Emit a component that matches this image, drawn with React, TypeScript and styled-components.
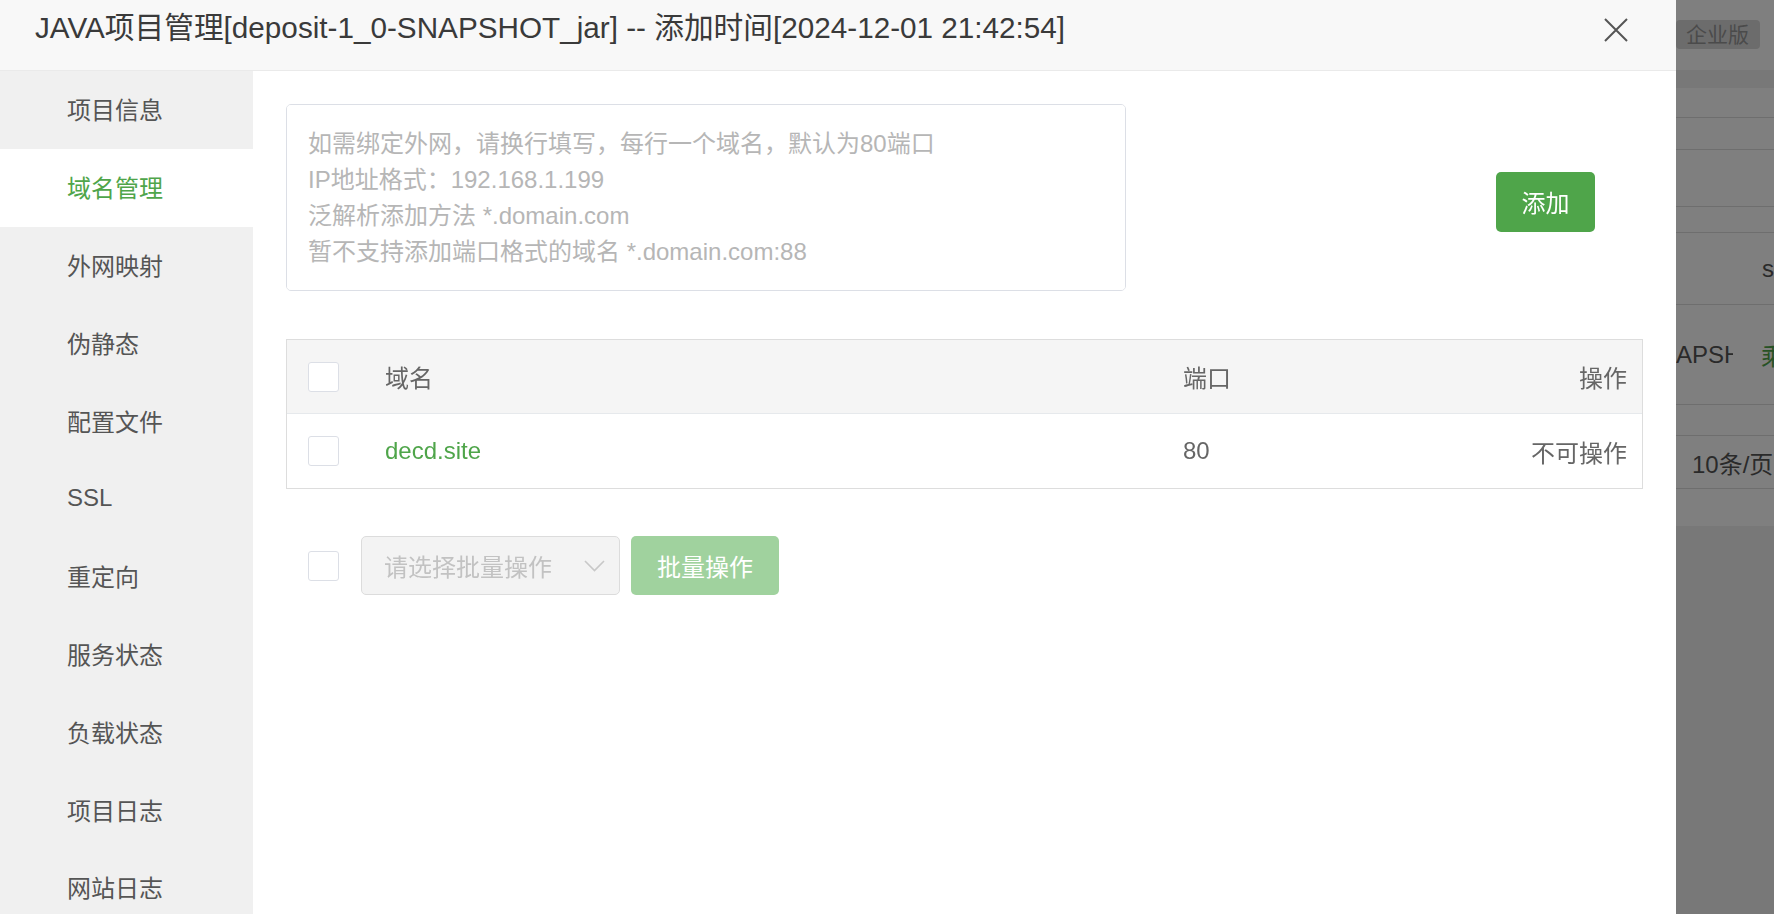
import React from "react";
import styled, { createGlobalStyle } from "styled-components";

const GREEN = "#4fa54a";

const GlobalStyle = createGlobalStyle`
  html, body {
    margin: 0;
    padding: 0;
    overflow: hidden;
  }
  body {
    font-family: "Liberation Sans", "Noto Sans CJK SC", sans-serif;
    background: #fff;
  }
  * {
    box-sizing: border-box;
  }
`;

const Screen = styled.div`
  display: flex;
  width: 1774px;
  height: 914px;
  overflow: hidden;
`;

const Dialog = styled.div`
  width: 1676px;
  flex: none;
  display: flex;
  flex-direction: column;
  background: #fff;
`;

const Header = styled.div`
  height: 71px;
  flex: none;
  display: flex;
  align-items: flex-start;
  justify-content: space-between;
  padding-left: 35px;
  background: #f8f8f8;
  border-bottom: 1px solid #eaeaea;
`;

const Title = styled.div`
  font-size: 29.7px;
  line-height: 56px;
  color: #3a3a3a;
  white-space: nowrap;
`;

const CloseButton = styled.button`
  width: 24px;
  height: 24px;
  margin: 18px 48px 0 0;
  padding: 0;
  border: 0;
  background: none;
  cursor: pointer;
  & svg {
    display: block;
  }
`;

const Body = styled.div`
  flex: 1;
  display: flex;
  min-height: 0;
`;

const Sidebar = styled.div`
  width: 253px;
  flex: none;
  background: #f0f0f0;
  display: flex;
  flex-direction: column;
`;

const NavItem = styled.div<{ $active?: boolean }>`
  height: 77.8px;
  flex: none;
  display: flex;
  align-items: center;
  padding-left: 67px;
  padding-bottom: 2px;
  font-size: 24px;
  color: ${(p) => (p.$active ? GREEN : "#555")};
  background: ${(p) => (p.$active ? "#fff" : "transparent")};
  cursor: pointer;
`;

const Content = styled.div`
  flex: 1;
  padding: 33px 33px;
`;

const InputRow = styled.div`
  display: flex;
  align-items: center;
`;

const DomainInput = styled.textarea`
  width: 840px;
  height: 187px;
  padding: 21px 21px;
  border: 1px solid #dcdfe6;
  border-radius: 5px;
  font-family: inherit;
  font-size: 24px;
  line-height: 36px;
  color: #333;
  resize: none;
  outline: none;
  &::placeholder {
    color: #b6b6b6;
  }
`;

const Button = styled.button<{ $disabled?: boolean }>`
  height: 60px;
  padding: 0 22px;
  border: 0;
  border-radius: 5px;
  font-family: inherit;
  font-size: 24px;
  color: #fff;
  background: ${(p) => (p.$disabled ? "#a0d29e" : GREEN)};
  cursor: ${(p) => (p.$disabled ? "not-allowed" : "pointer")};
`;

const AddButton = styled(Button)`
  width: 99px;
  margin-left: 370px;
  margin-top: 8px;
`;

const Table = styled.div`
  margin-top: 48px;
  border: 1px solid #dddddd;
`;

const Row = styled.div<{ $head?: boolean }>`
  display: grid;
  grid-template-columns: 98px 798px 1fr auto;
  align-items: center;
  height: 74px;
  padding-right: 15px;
  font-size: 24px;
  color: #666;
  background: ${(p) => (p.$head ? "#f5f5f5" : "#fff")};
  border-bottom: ${(p) => (p.$head ? "1px solid #e6e9ec" : "0")};
`;

const Check = styled.span`
  display: block;
  width: 31px;
  height: 30px;
  margin-left: 21px;
  border: 1px solid #dcdfe6;
  border-radius: 3px;
  background: #fff;
`;

const DomainLink = styled.a`
  color: ${GREEN};
  text-decoration: none;
`;

const BulkBar = styled.div`
  margin-top: 47px;
  display: flex;
  align-items: center;
  padding-left: 1px;
  & > ${Check} {
    margin-right: 22px;
  }
`;

const BulkSelect = styled.div`
  width: 259px;
  height: 59px;
  display: flex;
  align-items: center;
  justify-content: space-between;
  padding: 0 14px 0 22px;
  margin-right: 11px;
  border: 1px solid #dcdcdc;
  border-radius: 5px;
  background: #f3f3f3;
  font-size: 24px;
  color: #c2c2c2;
`;

const BulkButton = styled(Button)`
  width: 148px;
  height: 59px;
`;

/* background page seen through the overlay on the right */
const Backdrop = styled.div`
  position: relative;
  flex: 1;
  background: #f0f0f0;
  overflow: hidden;
  &::after {
    content: "";
    position: absolute;
    inset: 0;
    background: rgba(0, 0, 0, 0.5);
  }
`;

const PageTop = styled.div`
  height: 70px;
  background: #fff;
  padding-top: 20px;
`;

const Badge = styled.div`
  width: 84px;
  height: 29px;
  border-radius: 4px;
  background: #d9d9d9;
  color: #979797;
  font-size: 21px;
  line-height: 29px;
  padding-left: 10px;
  white-space: nowrap;
`;

const PageCard = styled.div`
  margin-top: 18px;
  background: #fff;
  height: 438px;
`;

const PageRow = styled.div<{ $h: number }>`
  height: ${(p) => p.$h}px;
  display: flex;
  align-items: center;
  border-bottom: 1px solid #dddddd;
  font-size: 24px;
  color: #555;
  white-space: nowrap;
  overflow: hidden;
`;

const Clip = styled.span<{ $w: number; $pad?: number }>`
  display: inline-block;
  width: ${(p) => p.$w}px;
  padding-left: ${(p) => p.$pad || 0}px;
  overflow: hidden;
  flex: none;
`;

const GreenText = styled.span`
  color: ${GREEN};
`;

const CloseIcon = () => (
  <svg width="24" height="24" viewBox="0 0 24 24">
    <path d="M1 1 L23 23 M23 1 L1 23" stroke="#555" strokeWidth="2" fill="none" />
  </svg>
);

const Chevron = () => (
  <svg width="21" height="12" viewBox="0 0 21 12">
    <path d="M1 1 L10.5 10.5 L20 1" stroke="#c8c8c8" strokeWidth="1.6" fill="none" />
  </svg>
);

const navItems = [
  "项目信息",
  "域名管理",
  "外网映射",
  "伪静态",
  "配置文件",
  "SSL",
  "重定向",
  "服务状态",
  "负载状态",
  "项目日志",
  "网站日志",
];

const placeholder = [
  "如需绑定外网，请换行填写，每行一个域名，默认为80端口",
  "IP地址格式：192.168.1.199",
  "泛解析添加方法 *.domain.com",
  "暂不支持添加端口格式的域名 *.domain.com:88",
].join("\n");

const domains = [{ name: "decd.site", port: 80 }];

export default function App() {
  return (
    <>
      <GlobalStyle />
      <Screen>
        <Dialog>
          <Header>
            <Title>JAVA项目管理[deposit-1_0-SNAPSHOT_jar] -- 添加时间[2024-12-01 21:42:54]</Title>
            <CloseButton aria-label="关闭">
              <CloseIcon />
            </CloseButton>
          </Header>
          <Body>
            <Sidebar>
              {navItems.map((item) => (
                <NavItem key={item} $active={item === "域名管理"}>
                  {item}
                </NavItem>
              ))}
            </Sidebar>
            <Content>
              <InputRow>
                <DomainInput placeholder={placeholder} />
                <AddButton>添加</AddButton>
              </InputRow>

              <Table>
                <Row $head>
                  <Check />
                  <span>域名</span>
                  <span>端口</span>
                  <span>操作</span>
                </Row>
                {domains.map((d) => (
                  <Row key={d.name}>
                    <Check />
                    <DomainLink href="#">{d.name}</DomainLink>
                    <span>{d.port}</span>
                    <span>不可操作</span>
                  </Row>
                ))}
              </Table>

              <BulkBar>
                <Check />
                <BulkSelect>
                  <span>请选择批量操作</span>
                  <Chevron />
                </BulkSelect>
                <BulkButton $disabled>批量操作</BulkButton>
              </BulkBar>
            </Content>
          </Body>
        </Dialog>

        <Backdrop>
          <PageTop>
            <Badge>企业版</Badge>
          </PageTop>
          <PageCard>
            <PageRow $h={30} />
            <PageRow $h={32} />
            <PageRow $h={57} />
            <PageRow $h={26} />
            <PageRow $h={72}>
              <Clip $w={98} $pad={86}>s</Clip>
            </PageRow>
            <PageRow $h={100}>
              <Clip $w={57}>APSHOT</Clip>
              <Clip $w={41} $pad={28}>
                <GreenText>乘</GreenText>
              </Clip>
            </PageRow>
            <PageRow $h={31} />
            <PageRow $h={53}>
              <Clip $w={98} $pad={16}>10条/页</Clip>
            </PageRow>
          </PageCard>
        </Backdrop>
      </Screen>
    </>
  );
}
